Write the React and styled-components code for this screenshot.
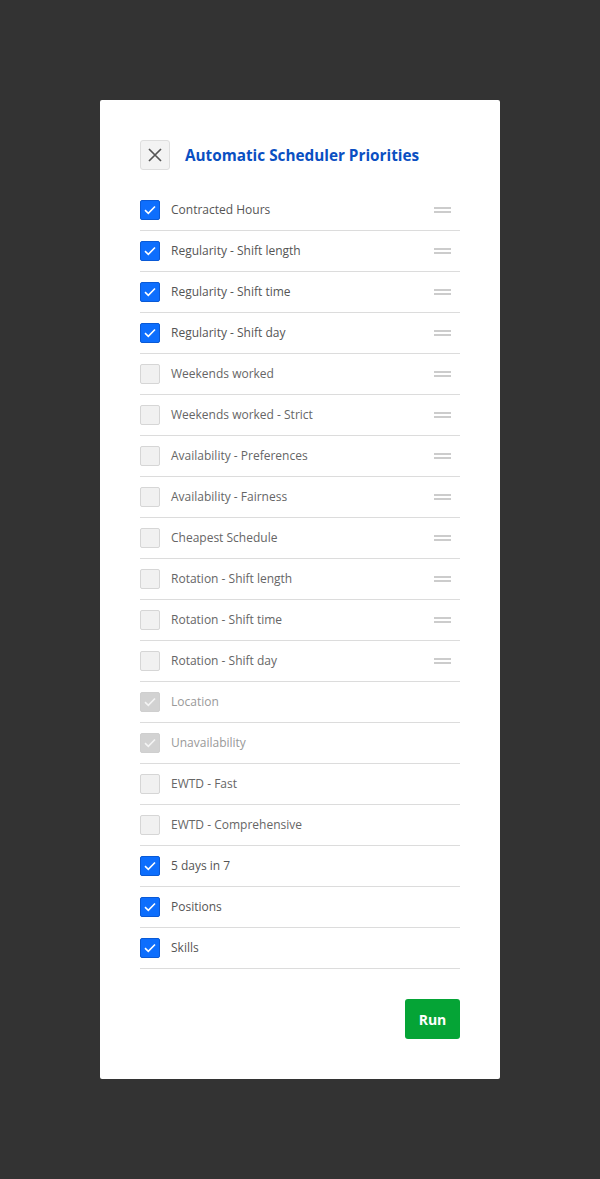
import React, { useState } from "react";
import styled, { createGlobalStyle } from "styled-components";

const GlobalStyle = createGlobalStyle`
  * { box-sizing: border-box; }
  body {
    margin: 0;
    background: #333333;
    font-family: "Open Sans", "Noto Sans", sans-serif;
  }
`;

const Page = styled.div`
  min-height: 1179px;
  padding: 100px 100px;
`;

const Card = styled.div`
  width: 400px;
  background: #ffffff;
  border-radius: 2px;
  padding: 40px;
`;

const Header = styled.div`
  display: flex;
  align-items: center;
  gap: 15px;
  margin-bottom: 20px;
`;

const CloseButton = styled.button`
  width: 30px;
  height: 30px;
  padding: 0;
  display: flex;
  align-items: center;
  justify-content: center;
  background: #f3f3f3;
  border: 1px solid #dedede;
  border-radius: 3px;
  cursor: pointer;
`;

const Title = styled.h1`
  margin: 0;
  font-size: 15.3px;
  font-weight: 700;
  color: #0a4fc2;
`;

const List = styled.ul`
  list-style: none;
  margin: 0;
  padding: 0;
`;

const Row = styled.li`
  display: flex;
  align-items: center;
  height: 41px;
  border-bottom: 1px solid #dcdcdc;
`;

const Box = styled.span`
  width: 20px;
  height: 20px;
  flex: none;
  display: flex;
  align-items: center;
  justify-content: center;
  border-radius: 2px;
  border: 1px solid
    ${({ $state }) =>
      $state === "on" ? "#0a5ad6" : $state === "locked" ? "#cfcfcf" : "#d6d6d6"};
  background: ${({ $state }) =>
    $state === "on" ? "#0d6efd" : $state === "locked" ? "#d2d2d2" : "#f1f1f1"};
`;

const Label = styled.span`
  flex: 1;
  margin-left: 11px;
  margin-bottom: 2px;
  font-size: 12px;
  color: ${({ $state }) =>
    $state === "on" ? "#555555" : $state === "locked" ? "#999999" : "#666666"};
`;

const Handle = styled.span`
  width: 17px;
  margin-right: 9px;
  display: flex;
  flex-direction: column;
  gap: 2px;

  &::before,
  &::after {
    content: "";
    height: 2px;
    background: #cccccc;
  }
`;

const Footer = styled.div`
  display: flex;
  justify-content: flex-end;
  margin-top: 30px;
`;

const RunButton = styled.button`
  width: 55px;
  height: 40px;
  border: none;
  border-radius: 3px;
  background: #05a436;
  color: #ffffff;
  font-family: inherit;
  font-size: 14px;
  font-weight: 700;
  cursor: pointer;
`;

const initial = [
  { label: "Contracted Hours", state: "on", drag: true },
  { label: "Regularity - Shift length", state: "on", drag: true },
  { label: "Regularity - Shift time", state: "on", drag: true },
  { label: "Regularity - Shift day", state: "on", drag: true },
  { label: "Weekends worked", state: "off", drag: true },
  { label: "Weekends worked - Strict", state: "off", drag: true },
  { label: "Availability - Preferences", state: "off", drag: true },
  { label: "Availability - Fairness", state: "off", drag: true },
  { label: "Cheapest Schedule", state: "off", drag: true },
  { label: "Rotation - Shift length", state: "off", drag: true },
  { label: "Rotation - Shift time", state: "off", drag: true },
  { label: "Rotation - Shift day", state: "off", drag: true },
  { label: "Location", state: "locked" },
  { label: "Unavailability", state: "locked" },
  { label: "EWTD - Fast", state: "off" },
  { label: "EWTD - Comprehensive", state: "off" },
  { label: "5 days in 7", state: "on" },
  { label: "Positions", state: "on" },
  { label: "Skills", state: "on" },
];

const Check = ({ color }) => (
  <svg width="12" height="10" viewBox="0 0 12 10" fill="none">
    <path d="M1 5.2 4.3 8.3 11 1.5" stroke={color} strokeWidth="1.6" />
  </svg>
);

const App = () => {
  const [items, setItems] = useState(initial);

  const toggle = (i) =>
    setItems((prev) =>
      prev.map((it, j) =>
        j === i && it.state !== "locked"
          ? { ...it, state: it.state === "on" ? "off" : "on" }
          : it
      )
    );

  return (
    <Page>
      <GlobalStyle />
      <Card>
        <Header>
          <CloseButton aria-label="Close">
            <svg width="16" height="16" viewBox="0 0 16 16">
              <path d="M2 2 14 14M14 2 2 14" stroke="#555" strokeWidth="1.7" />
            </svg>
          </CloseButton>
          <Title>Automatic Scheduler Priorities</Title>
        </Header>
        <List>
          {items.map((it, i) => (
            <Row key={it.label} onClick={() => toggle(i)}>
              <Box $state={it.state}>
                {it.state !== "off" && <Check color={it.state === "on" ? "#fff" : "#f4f4f4"} />}
              </Box>
              <Label $state={it.state}>{it.label}</Label>
              {it.drag && <Handle />}
            </Row>
          ))}
        </List>
        <Footer>
          <RunButton>Run</RunButton>
        </Footer>
      </Card>
    </Page>
  );
};

export default App;
